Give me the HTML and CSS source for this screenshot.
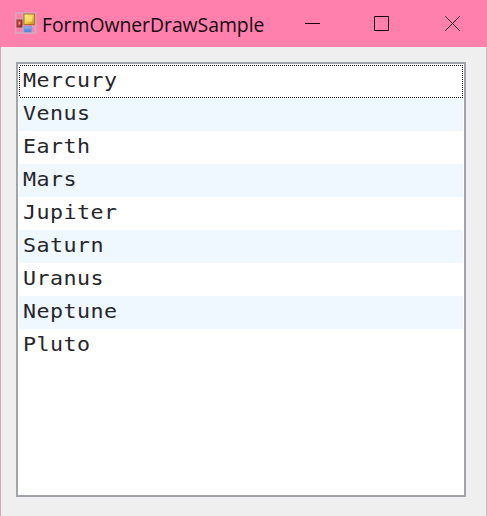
FILE: index.html
```html
<!DOCTYPE html>
<html lang="en">
<head>
<meta charset="utf-8">
<title>FormOwnerDrawSample</title>
<link rel="stylesheet" href="styles.css">
</head>
<body>
<div class="window">
  <header class="titlebar">
    <svg class="app-icon" width="22" height="22" viewBox="0 0 22 22">
      <defs>
        <linearGradient id="gold" x1="0" y1="0" x2="1" y2="1"><stop offset="0" stop-color="#fff0a0"/><stop offset=".5" stop-color="#f3ce48"/><stop offset="1" stop-color="#c88c13"/></linearGradient>
        <linearGradient id="red" x1="0" y1="0" x2="1" y2="1"><stop offset="0" stop-color="#d8604f"/><stop offset="1" stop-color="#8e2822"/></linearGradient>
        <linearGradient id="blue" x1="0" y1="0" x2="0" y2="1"><stop offset="0" stop-color="#8abcf2"/><stop offset="1" stop-color="#3a7bd8"/></linearGradient>
      </defs>
      <rect x=".5" y="1" width="20" height="20" fill="none" stroke="#d8a6bb" stroke-width="2"/>
      <path d="M8 1v20M1 7h8M1 15h20" stroke="#d8a6bb" stroke-width="1.6"/>
      <rect x="9" y="2" width="10.500" height="10.500" fill="url(#gold)" stroke="#a87526"/>
      <rect x="11.500" y="4.500" width="5.500" height="5" fill="#ffe780" opacity=".7"/>
      <rect x="2" y="8" width="5" height="7" fill="url(#red)" stroke="#8d3030"/>
      <rect x="3.700" y="10" width="1.500" height="2.500" fill="#f0a090"/>
      <rect x="9" y="14.500" width="7.500" height="5.500" fill="url(#blue)" stroke="#7b9bd0" stroke-width=".7"/>
    </svg>
    <h1 class="title">FormOwnerDrawSample</h1>
    <div class="controls">
      <svg width="15" height="15" viewBox="0 0 15 15"><path d="M0 7.500h15"/></svg>
      <svg width="15" height="15" viewBox="0 0 15 15"><path d="M.5.500h14v14H.5z"/></svg>
      <svg width="15" height="15" viewBox="0 0 15 15"><path d="M.3.300l14.400 14.400M14.700.300L.3 14.700"/></svg>
    </div>
  </header>
  <main class="client">
    <ul class="list">
      <li class="row focused"><span>Mercury</span><svg class="focus" width="446" height="33" viewBox="0 0 446 33"><path d="M2 .5H445M2 32.500H445M1.500 2V32M444.500 2V32"/></svg></li>
      <li class="row"><span>Venus</span></li>
      <li class="row"><span>Earth</span></li>
      <li class="row"><span>Mars</span></li>
      <li class="row"><span>Jupiter</span></li>
      <li class="row"><span>Saturn</span></li>
      <li class="row"><span>Uranus</span></li>
      <li class="row"><span>Neptune</span></li>
      <li class="row"><span>Pluto</span></li>
    </ul>
  </main>
</div>
</body>
</html>
```
FILE: styles.css
```css
* { box-sizing: border-box; }
body { margin: 0; overflow: hidden; }
.window {
  width: 487px;
  height: 516px;
  display: flex;
  flex-direction: column;
  background: #efefef;
}
.titlebar {
  height: 47px;
  flex: none;
  display: flex;
  align-items: center;
  padding: 0 27px 1px 14px;
  background: #ff80ad;
  border-left: 1px solid #f783aa;
}
.app-icon { flex: none; }
.title {
  margin: 3px 0 0 5px;
  font: 400 20px/28px "Open Sans", "Noto Sans", sans-serif;
  letter-spacing: -0.05px;
  transform: scaleX(0.97);
  transform-origin: left;
  color: #160a10;
  white-space: nowrap;
}
.controls {
  margin-left: auto;
  width: 155px;
  display: grid;
  grid-template-columns: 69px 71px 15px;
  fill: none;
  stroke: #16060c;
  stroke-width: 1;
}
.controls svg { display: block; }
.client {
  flex: 1;
  padding: 15px 20px 18px 15px;
  border-left: 1px solid #dda0b8;
  border-right: 1px solid #c4c4c4;
}
.list {
  height: 435px;
  margin: 0;
  padding: 1px 1px 0;
  list-style: none;
  background: #fff;
  border: 2px solid #a1a5aa;
}
.row {
  height: 33px;
  padding-left: 4px;
  font: 19.5px/32px "DejaVu Sans Mono", monospace;
  letter-spacing: 0.42px;
  color: #26262a;
}
.row span {
  display: inline-block;
  transform: scaleX(1.11);
  transform-origin: left;
}
.row:nth-child(even) { background: #eff7ff; }
.focused { position: relative; }
.focus {
  position: absolute;
  left: -1px;
  top: 0;
  fill: none;
  stroke: #111;
  stroke-dasharray: 1 1;
  shape-rendering: crispEdges;
}
```
